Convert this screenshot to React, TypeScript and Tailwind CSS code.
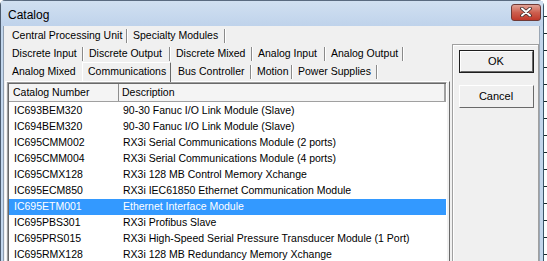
import React from 'react'

type Tab = { label: string; w: number; sel?: boolean; sep?: boolean }

const rows: Tab[][] = [
  [
    { label: 'Central Processing Unit', w: 121, sep: true },
    { label: 'Specialty Modules', w: 98, sep: true },
  ],
  [
    { label: 'Discrete Input', w: 77, sep: true },
    { label: 'Discrete Output', w: 87, sep: true },
    { label: 'Discrete Mixed', w: 82, sep: true },
    { label: 'Analog Input', w: 73, sep: true },
    { label: 'Analog Output', w: 78, sep: true },
  ],
  [
    { label: 'Analog Mixed', w: 75 },
    { label: 'Communications', w: 91, sel: true },
    { label: 'Bus Controller', w: 79, sep: true },
    { label: 'Motion', w: 41, sep: true },
    { label: 'Power Supplies', w: 85, sep: true },
  ],
]

const items = [
  ['IC693BEM320', '90-30 Fanuc I/O Link Module (Slave)'],
  ['IC694BEM320', '90-30 Fanuc I/O Link Module (Slave)'],
  ['IC695CMM002', 'RX3i Serial Communications Module (2 ports)'],
  ['IC695CMM004', 'RX3i Serial Communications Module (4 ports)'],
  ['IC695CMX128', 'RX3i 128 MB Control Memory Xchange'],
  ['IC695ECM850', 'RX3i IEC61850 Ethernet Communication Module'],
  ['IC695ETM001', 'Ethernet Interface Module'],
  ['IC695PBS301', 'RX3i Profibus Slave'],
  ['IC695PRS015', 'RX3i High-Speed Serial Pressure Transducer Module (1 Port)'],
  ['IC695RMX128', 'RX3i 128 MB Redundancy Memory Xchange'],
]

const selected = 6

function TabRow({ tabs }: { tabs: Tab[] }) {
  return (
    <div className="flex h-[18px] pl-[2px]">
      {tabs.map((t) =>
        t.sel ? (
          <div
            key={t.label}
            className="relative z-10 -mt-[1px] h-[20px] w-[91px] flex items-start"
          >
            <div className="h-[20px] w-[89px] flex items-center pl-[5px] pb-[1px] border-l border-t border-white border-r border-r-[#696969] rounded-t-[1px]">
              {t.label}
            </div>
          </div>
        ) : (
          <div
            key={t.label}
            style={{ width: t.w }}
            className="flex items-center justify-between pl-[5px]"
          >
            <span>{t.label}</span>
            {t.sep && <span className="h-[14px] w-[2px] border-l border-[#8a8a8a] border-r border-r-white" />}
          </div>
        )
      )}
    </div>
  )
}

function Button({ label, def }: { label: string; def?: boolean }) {
  return (
    <div className={`h-[23px] w-[75px] ${def ? 'border border-[#1e1e1e]' : ''}`}>
      <div className="h-full w-full border-l border-t border-white border-r border-b border-r-[#696969] border-b-[#696969] bg-[#f0f0f0] flex items-center justify-center text-[11px] text-black">
        {label}
      </div>
    </div>
  )
}

export default function App() {
  return (
    <div className="w-[547px] h-[261px] overflow-hidden flex bg-white font-['Liberation_Sans',Arial,sans-serif] text-[10.5px] text-black">
      <div className="w-[544px] h-full flex flex-col border-l border-[#4d5d70] rounded-tl-[5px] rounded-tr-[6px] border-t border-t-[#5a6b80] border-r border-r-[#3b5568] bg-[#c2d6ec]">
        {/* title bar */}
        <div className="h-[25px] shrink-0 flex items-center justify-between pl-[7px] pr-[2px] bg-gradient-to-b from-[#d1e0f1] to-[#bfd3eb]">
          <span className="text-[12px] text-black mt-[2px]">Catalog</span>
          <div className="h-[17px] w-[30px] mt-[-3px] rounded-[3px] border border-[#6f3a36] bg-gradient-to-b from-[#e0a296] via-[#cd5f4f] to-[#c0382a] flex items-center justify-center">
            <svg width="12" height="10" viewBox="0 0 12 10">
              <path d="M2 1.5 L10 8.5 M10 1.5 L2 8.5" stroke="#3a2a2a" strokeWidth="3.6" strokeLinecap="round" />
              <path d="M2 1.5 L10 8.5 M10 1.5 L2 8.5" stroke="#ffffff" strokeWidth="2" strokeLinecap="round" />
            </svg>
          </div>
        </div>
        {/* body */}
        <div className="flex-1 flex pl-[2px] pr-[3px]">
          <div className="flex-1 flex border-l border-[#8f9eb0] border-r border-r-[#9aa6b4] bg-[#f0f0f0]">
            {/* left: tabs + list */}
            <div className="ml-[1px] w-[445px] flex flex-col">
              <div className="pt-[1px] h-[55px] flex flex-col">
                {rows.map((r, i) => (
                  <TabRow key={i} tabs={r} />
                ))}
              </div>
              <div className="flex-1 border-l border-t border-white border-r border-r-[#696969] px-[1px]">
                <div className="h-full mr-[1px] border-l border-t border-[#a0a0a0] border-r border-r-white bg-white">
                  <div className="h-full border-l border-t border-[#696969]">
                    {/* header */}
                    <div className="h-[18px] flex border-b border-[#a0a0a0] bg-[#f4f4f4]">
                      <div className="w-[110px] pl-[4px] flex items-center border-r border-[#8e8e8e]">
                        Catalog Number
                      </div>
                      <div className="flex-1 pl-[3px] flex items-center border-r-2 border-[#a0a0a0]">
                        Description
                      </div>
                    </div>
                    <div className="pt-[1px] bg-white">
                      {items.map(([num, desc], i) => (
                        <div
                          key={num}
                          className={`h-[16px] flex items-center ${
                            i === selected ? 'bg-[#3399ff] text-white' : ''
                          }`}
                        >
                          <span className="w-[110px] pl-[5px]">{num}</span>
                          <span className="pl-[4px]">{desc}</span>
                        </div>
                      ))}
                    </div>
                  </div>
                </div>
              </div>
            </div>
            {/* right: buttons */}
            <div className="ml-[2px] mt-[18px] flex-1 border-l border-t border-[#a0a0a0] border-r border-r-[#a0a0a0]">
              <div className="h-full border-l border-t border-white flex flex-col items-center pt-[4px] gap-[12px]">
                <Button label="OK" def />
                <Button label="Cancel" />
              </div>
            </div>
          </div>
        </div>
      </div>
      {/* background strip */}
      <div className="w-[3px] h-full flex flex-col bg-white">
        {Array.from({ length: 15 }).map((_, i) => (
          <div key={i} className="h-[17px] border-b border-[#1b2b2b]" />
        ))}
      </div>
    </div>
  )
}
